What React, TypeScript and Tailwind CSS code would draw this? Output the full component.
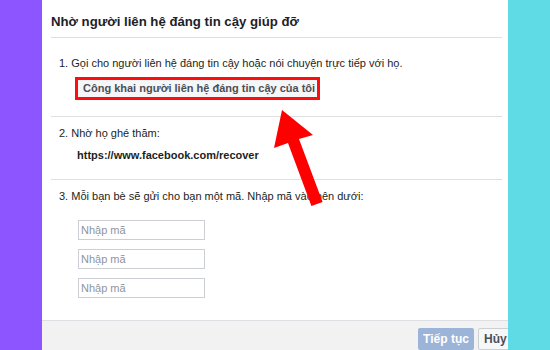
import React from 'react';

const font = { fontFamily: '"Liberation Sans", Arial, sans-serif' };

function CodeInput() {
  return (
    <div className="w-[127px] h-[20px] border border-[#ccd0d5] bg-white flex items-center px-[2px] text-[11px] text-[#90949c]">
      Nhập mã
    </div>
  );
}

export default function App() {
  return (
    <div className="relative flex w-[550px] h-[350px] overflow-hidden bg-[#5fdbe6]" style={font}>
      <div className="w-[42px] shrink-0 bg-[#8c55ff]" />
      <div className="w-[466px] shrink-0 bg-white flex flex-col overflow-hidden text-[#1c1e21]">
        <div className="ml-[9px] mr-[6px] h-[38px] border-b border-[#dddfe2] pt-[13px]">
          <h1 className="text-[13.2px] leading-[18px] font-bold text-[#1d2129] whitespace-nowrap">Nhờ người liên hệ đáng tin cậy giúp đỡ</h1>
        </div>

        <div className="ml-[9px] mr-[6px] h-[79px] border-b border-[#dddfe2] pt-[17px] pl-[8px]">
          <p className="text-[11px] leading-[16px] whitespace-nowrap">1. Gọi cho người liên hệ đáng tin cậy hoặc nói chuyện trực tiếp với họ.</p>
          <div className="mt-[6px] ml-[16px] w-[245px] h-[23px] border-[3px] border-[#ff0d0d] bg-[#f5f6f7] flex items-center pl-[5px]">
            <span className="text-[11px] font-bold text-[#4b4f56] whitespace-nowrap">Công khai người liên hệ đáng tin cậy của tôi</span>
          </div>
        </div>

        <div className="ml-[9px] mr-[6px] h-[63px] border-b border-[#dddfe2] pt-[8px] pl-[8px]">
          <p className="text-[11px] leading-[16px] whitespace-nowrap">2. Nhờ họ ghé thăm:</p>
          <p className="mt-[6px] ml-[18px] text-[11px] leading-[16px] font-bold whitespace-nowrap">https://www.facebook.com/recover</p>
        </div>

        <div className="ml-[9px] mr-[6px] h-[140px] pt-[8px] pl-[8px]">
          <p className="text-[11px] leading-[16px] whitespace-nowrap">3. Mỗi bạn bè sẽ gửi cho bạn một mã. Nhập mã vào bên dưới:</p>
          <div className="mt-[16px] ml-[19px] flex flex-col gap-[9px]">
            <CodeInput />
            <CodeInput />
            <CodeInput />
          </div>
        </div>

        <div className="flex-1 border-t border-[#dddfe2] bg-[#f2f2f2] pt-[7px] pl-[376px] flex gap-[4px]">
          <div className="w-[56px] h-[22px] shrink-0 rounded-[2px] bg-[#9cb4d8] flex items-center justify-center text-[12px] font-bold text-white whitespace-nowrap">
            Tiếp tục
          </div>
          <div className="w-[38px] h-[22px] shrink-0 rounded-[2px] border border-[#ccd0d5] bg-[#f6f7f9] flex items-center pl-[5px] text-[12px] font-bold text-[#4b4f56]">
            Hủy
          </div>
        </div>
      </div>

      <svg className="absolute left-0 top-0 pointer-events-none" width="550" height="350" viewBox="0 0 550 350">
        <polygon
          fill="#ff0000"
          points="282,110 313,135 299,139 322.6,201.9 311.4,206.1 288,143 274,148"
        />
      </svg>
    </div>
  );
}
